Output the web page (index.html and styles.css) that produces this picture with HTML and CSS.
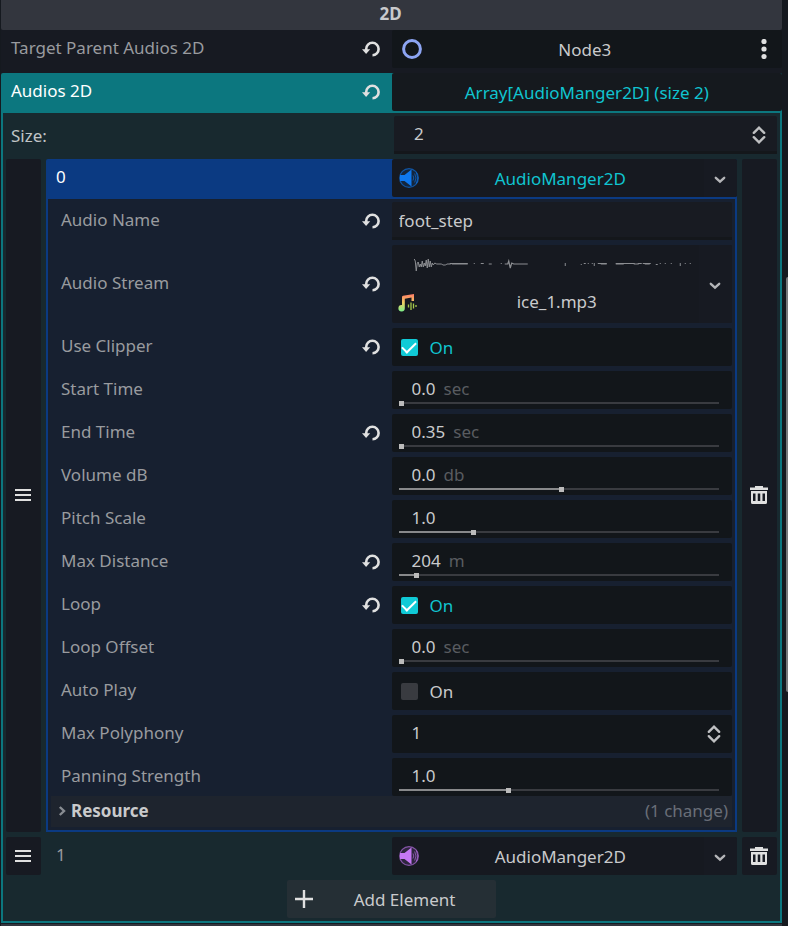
FILE: index.html
```html
<!DOCTYPE html>
<html lang="en">
<head>
<meta charset="utf-8">
<title>Inspector</title>
<link rel="stylesheet" href="styles.css">
</head>
<body>
<svg class="sprite" aria-hidden="true">
  <symbol id="reload" viewBox="0 0 20 18">
    <path d="M4.200 10V9A6.200 6.200 0 1 1 10.500 15.200" fill="none" stroke="currentColor" stroke-width="2.6"/>
    <path d="M0 9.2H8.200L4.100 14z" fill="currentColor"/>
  </symbol>
  <symbol id="chevron" viewBox="0 0 12 8">
    <path d="M1.8 1.8 6 5.6 10.2 1.8" fill="none" stroke="currentColor" stroke-width="2.4" stroke-linecap="round"/>
  </symbol>
  <symbol id="updown" viewBox="0 0 14 20">
    <path d="M1.8 7.8 7 2.6 12.2 7.8M1.8 12.2 7 17.4 12.2 12.2" fill="none" stroke="currentColor" stroke-width="2.4" stroke-linecap="round"/>
  </symbol>
  <symbol id="grip" viewBox="0 0 16 14">
    <path d="M0 2H16M0 7H16M0 12H16" fill="none" stroke="currentColor" stroke-width="2"/>
  </symbol>
  <symbol id="trash" viewBox="0 0 18 18">
    <path fill="currentColor" fill-rule="evenodd" d="M5 0H13V1.500H18V4H0V1.500H5zM1 5H17V16.500Q17 18 15.500 18H2.500Q1 18 1 16.500zM3 7.500V15H5.500V7.500zM7.750 7.500V15H10.250V7.500zM12.500 7.500V15H15V7.500z"/>
  </symbol>
  <symbol id="speaker" viewBox="0 0 20 20">
    <circle cx="10" cy="10" r="9.400" fill="currentColor" fill-opacity=".14" stroke="currentColor" stroke-width="1.200" stroke-opacity=".6"/>
    <path d="M1 7H5.500L12.500 1.500V18.500L5.500 13H1z" fill="currentColor"/>
    <path d="M14 7.500Q15.500 10 14 12.500M15.700 5.500Q18.300 10 15.700 14.500M17.500 4.500Q20 10 17.500 15.500" fill="none" stroke="currentColor" opacity=".6"/>
  </symbol>
</svg>

<main class="inspector">
  <h2 class="category">2D</h2>

  <div class="row">
    <div class="name"><span>Target Parent Audios 2D</span>
      <button class="icon-btn" aria-label="Revert"><svg class="i-reload"><use href="#reload"/></svg></button></div>
    <div class="field picker">
      <svg class="i-20" viewBox="0 0 20 20"><circle cx="10" cy="10" r="8.400" fill="none" stroke="#8da5f3" stroke-width="3"/></svg>
      <button class="pick node">Node3</button>
      <button class="more" aria-label="More"><svg class="i-20" viewBox="0 0 20 20" fill="#e0e0e0"><circle cx="10" cy="2.500" r="2.600"/><circle cx="10" cy="10" r="2.600"/><circle cx="10" cy="17.500" r="2.600"/></svg></button>
    </div>
  </div>

  <section class="array">
    <div class="head">
      <div class="name"><span>Audios 2D</span>
        <button class="icon-btn" aria-label="Revert"><svg class="i-reload"><use href="#reload"/></svg></button></div>
      <button class="field open">Array[AudioManger2D] (size 2)</button>
    </div>
    <div class="array-body">
      <div class="row size">
        <label class="name" for="size">Size:</label>
        <div class="field raised spin"><input id="size" type="number" value="2"><svg class="i-updown"><use href="#updown"/></svg></div>
      </div>

      <div class="item">
        <button class="side" aria-label="Move element 0"><svg class="i-grip"><use href="#grip"/></svg></button>
        <div class="resource">
          <div class="head">
            <div class="name">0</div>
            <div class="field picker type">
              <svg class="i-20 blue"><use href="#speaker"/></svg>
              <button class="pick accent">AudioManger2D</button>
              <button class="drop" aria-label="Options"><svg class="i-chevron"><use href="#chevron"/></svg></button>
            </div>
          </div>
          <div class="props">
            <div class="row">
              <div class="name"><label for="aname">Audio Name</label>
                <button class="icon-btn" aria-label="Revert"><svg class="i-reload"><use href="#reload"/></svg></button></div>
              <div class="field raised"><input id="aname" class="text" type="text" value="foot_step"></div>
            </div>
            <div class="row">
              <div class="name"><span>Audio Stream</span>
                <button class="icon-btn" aria-label="Revert"><svg class="i-reload"><use href="#reload"/></svg></button></div>
              <div class="field picker stream">
                <button class="preview">
                  <svg class="wave" viewBox="0 0 280 14" fill="none" stroke="#8b8d91">
                    <path d="M.5 1 1.500 3 2.500 13 3.500 5 4.500 4 5.500 9 6.500 6 7.500 9 8.500 3 9.500 9 10.500 5 11.500 8 12.500 2 13.500 10 14.500 1 15.500 9 16.500 3 17.500 9 18.500 5 19.500 7 21 5 23 6H28L29 7H32L33 6H37"/>
                    <path d="M38 6H54M75 6H78M91 6H94L95 3 96.500 10 98 5 100 6H114M187 6H193M202 6H210M220 6H225M231 6H236" stroke-width="1.200"/>
                    <path d="M36 5.500H54M60 5.500H61M67 5.500H70M87 5.500H88M151.500 5V8M167 6.500H168M170 5.500H172M174 5.500H175M178 5.500H179M180.500 5V8M184 5.500H193M202 5.500H221M224 5.500H228M229 5.500H237M242 6.500H244M246 5.500H247M251 5.500H252M257 5.500H258M266.500 5V8M271 5.500H272M276 5.500H277"/>
                  </svg>
                  <span class="file">
                    <svg class="i-20" viewBox="0 0 20 20">
                      <defs><linearGradient id="note" x1="0" y1="0" x2="0" y2="1"><stop offset="0" stop-color="#ff7a66"/><stop offset=".5" stop-color="#f0cf62"/><stop offset="1" stop-color="#7df08a"/></linearGradient></defs>
                      <path fill="url(#note)" d="M5 4Q5 3 6 2.800L17 1V8H14.500V4.500L7.800 5.800V15A3.200 3.200 0 1 1 5 12z"/>
                      <path d="M11.500 11.500V14.500M14 9.500V17M16.500 10.500V15.500M19 12V14" stroke="#a5c84a" stroke-width="1.300" fill="none"/>
                    </svg>
                    <span>ice_1.mp3</span>
                  </span>
                </button>
                <button class="drop" aria-label="Options"><svg class="i-chevron"><use href="#chevron"/></svg></button>
              </div>
            </div>
            <div class="row">
              <div class="name"><span>Use Clipper</span>
                <button class="icon-btn" aria-label="Revert"><svg class="i-reload"><use href="#reload"/></svg></button></div>
              <label class="field check"><input type="checkbox" checked><span>On</span></label>
            </div>
            <div class="row">
              <label class="name" for="start">Start Time</label>
              <div class="field slide"><div class="value"><input id="start" type="text" value="0.0"><span>sec</span></div><input type="range" aria-label="Start Time" value="0" style="--v:0%"></div>
            </div>
            <div class="row">
              <div class="name"><label for="end">End Time</label>
                <button class="icon-btn" aria-label="Revert"><svg class="i-reload"><use href="#reload"/></svg></button></div>
              <div class="field slide"><div class="value"><input id="end" type="text" value="0.35"><span>sec</span></div><input type="range" aria-label="End Time" value="0" style="--v:0%"></div>
            </div>
            <div class="row">
              <label class="name" for="volume">Volume dB</label>
              <div class="field slide"><div class="value"><input id="volume" type="text" value="0.0"><span>db</span></div><input type="range" aria-label="Volume dB" value="51" style="--v:51%"></div>
            </div>
            <div class="row">
              <label class="name" for="pitch">Pitch Scale</label>
              <div class="field slide"><div class="value"><input id="pitch" type="text" value="1.0"></div><input type="range" aria-label="Pitch Scale" value="23" style="--v:23%"></div>
            </div>
            <div class="row">
              <div class="name"><label for="distance">Max Distance</label>
                <button class="icon-btn" aria-label="Revert"><svg class="i-reload"><use href="#reload"/></svg></button></div>
              <div class="field slide"><div class="value"><input id="distance" type="text" value="204"><span>m</span></div><input type="range" aria-label="Max Distance" value="5" style="--v:5%"></div>
            </div>
            <div class="row">
              <div class="name"><span>Loop</span>
                <button class="icon-btn" aria-label="Revert"><svg class="i-reload"><use href="#reload"/></svg></button></div>
              <label class="field check"><input type="checkbox" checked><span>On</span></label>
            </div>
            <div class="row">
              <label class="name" for="offset">Loop Offset</label>
              <div class="field slide"><div class="value"><input id="offset" type="text" value="0.0"><span>sec</span></div><input type="range" aria-label="Loop Offset" value="0" style="--v:0%"></div>
            </div>
            <div class="row">
              <div class="name"><span>Auto Play</span></div>
              <label class="field check"><input type="checkbox"><span>On</span></label>
            </div>
            <div class="row">
              <label class="name" for="poly">Max Polyphony</label>
              <div class="field spin"><input id="poly" type="number" value="1"><svg class="i-updown"><use href="#updown"/></svg></div>
            </div>
            <div class="row">
              <label class="name" for="panning">Panning Strength</label>
              <div class="field slide"><div class="value"><input id="panning" type="text" value="1.0"></div><input type="range" aria-label="Panning Strength" value="34" style="--v:34%"></div>
            </div>
            <button class="group"><svg class="i-arrow" viewBox="0 0 8 12"><path d="M1.800 2 6 6 1.800 10" fill="none" stroke="currentColor" stroke-width="2.400"/></svg><b>Resource</b><span>(1 change)</span></button>
          </div>
        </div>
        <button class="side" aria-label="Remove element 0"><svg class="i-18"><use href="#trash"/></svg></button>
      </div>

      <div class="item">
        <button class="side" aria-label="Move element 1"><svg class="i-grip"><use href="#grip"/></svg></button>
        <div class="row closed">
          <div class="name">1</div>
          <div class="field picker type">
            <svg class="i-20 purple"><use href="#speaker"/></svg>
            <button class="pick">AudioManger2D</button>
            <button class="drop" aria-label="Options"><svg class="i-chevron"><use href="#chevron"/></svg></button>
          </div>
        </div>
        <button class="side" aria-label="Remove element 1"><svg class="i-18"><use href="#trash"/></svg></button>
      </div>

      <button class="add"><svg class="i-18" viewBox="0 0 18 18"><path d="M9 0V18M0 9H18" stroke="currentColor" stroke-width="2.400"/></svg><span>Add Element</span></button>
    </div>
  </section>
  <div class="next"></div>
</main>
<div class="scrollbar"><div class="thumb"></div></div>
</body>
</html>
```

FILE: styles.css
```css
* { box-sizing: border-box; }
body {
  margin: 0;
  height: 100vh;
  overflow: hidden;
  display: flex;
  background: #15191f;
  color: #c9cacc;
  font: 17px/24px "Noto Sans", sans-serif;
}
button, input { font: inherit; color: inherit; background: none; border: 0; margin: 0; padding: 0; min-width: 0; }
input { outline: 0; }
svg { display: block; flex: none; }
.sprite { position: absolute; width: 0; height: 0; }
.i-reload { width: 20px; height: 18px; }
.i-20 { width: 20px; height: 20px; }
.i-18 { width: 18px; height: 18px; }
.i-chevron { width: 12px; height: 8px; }
.i-updown { width: 14px; height: 20px; }
.i-grip { width: 16px; height: 14px; }
.i-arrow { width: 8px; height: 12px; }
.blue { color: #0f78ee; }
.purple { color: #c678f5; }

.inspector { flex: 1; margin-left: 1px; background: #171a22; }
.category {
  margin: 0;
  height: 30px;
  padding: 0 2px 2px 0;
  background: #33363e;
  border-radius: 0 0 2px 2px;
  font-size: 17px;
  line-height: 28px;
  text-align: center;
}
.row, .head { display: grid; grid-template-columns: 1fr 1fr; }
.row { margin-bottom: 5px; }
.name {
  display: flex;
  align-items: center;
  justify-content: space-between;
  padding: 0 10px;
  color: #999b9f;
  min-height: 38px;
}
.name > span, .name > label, label.name, div.name:not(:has(*)) { padding-bottom: 2px; }
.icon-btn { color: #e0e0e0; }
.field { min-height: 38px; border-radius: 2px; background: #12161a; min-width: 0; }
.raised { background: #181b22; border-bottom: 3px solid #14171b; border-radius: 2px 2px 0 0; }

.picker { display: flex; align-items: center; padding-left: 10px; }
.pick { flex: 1; height: 38px; padding: 2px 2px 0 0; text-align: center; }
.node { padding: 2px 0 0 2px; }
.more { width: 36px; height: 38px; display: grid; place-items: center; }
.type { background: #161920; padding-left: 7px; }
.drop { align-self: stretch; width: 33px; display: grid; place-items: center; background: #171a22; border-radius: 0 2px 2px 0; color: #b4b5b8; padding: 3px 2px 0 0; }
.accent, .open { color: #10c4d0; }

.head { background: #0c777f; border-radius: 2px 2px 0 0; padding-bottom: 2px; }
.head .name { color: #fff; }
.open { background: #15191e; text-align: center; padding-top: 2px; }
.array-body { border: 2px solid #0c777f; border-top: 0; background: #18292f; padding: 3px; }
.size { column-gap: 5px; }
.size label.name { color: #c0c4c6; padding: 1px 5px 0; }
.spin { display: flex; align-items: center; padding: 0 11px 0 20px; }
.spin input { flex: 1; appearance: textfield; padding-bottom: 2px; }
.spin.raised { padding-top: 2px; }
.spin input::-webkit-inner-spin-button { appearance: none; }
.spin svg { color: #bfc0c2; }

.item { display: grid; grid-template-columns: 35px 1fr 35px; gap: 5px; margin-bottom: 5px; }
.side { display: grid; place-items: center; background: #171a22; border-radius: 2px; color: #e0e0e0; padding: 0 2px 1px 0; }
.resource .head { background: #0b3a82; }
.closed { margin: 0; }
.props { border: 2px solid #0b3a82; border-top: 0; background: #172030; padding: 3px; }
.text { width: 100%; height: 35px; padding: 2px 7px 0; }
.stream { background: #161920; padding: 0; }
.preview { flex: 1; height: 78px; padding: 4px 5px 0; }
.wave { width: 100%; height: 14px; padding-left: 16px; }
.file { display: flex; align-items: center; height: 24px; margin-top: 18px; }
.file svg { margin-top: 2px; }
.file span { flex: 1; padding-left: 3px; }
.check { display: flex; align-items: center; gap: 12px; padding: 0 9px; }
.check input { appearance: none; width: 17px; height: 17px; border-radius: 2px; background: #393b40; display: grid; place-items: center; }
.check span { padding-top: 2px; }
.check input:checked { background: #10cad6; }
.check input:checked::before { content: ""; width: 12px; height: 6px; border: solid #fff; border-width: 0 0 2px 2px; rotate: -45deg; margin-bottom: 3px; }
.check input:checked + span { color: #10c4d0; }
.slide { display: flex; flex-direction: column; padding: 6px 13px 3px 7px; }
.value { display: flex; gap: 8px; padding-left: 13px; height: 24px; }
.value input { field-sizing: content; height: 24px; }
.value span { color: #595c60; }
input[type="range"] {
  appearance: none;
  display: block;
  height: 5px;
  background: linear-gradient(90deg, #88898b var(--v), #393b40 var(--v)) 0 1px / 100% 2px no-repeat;
}
input[type="range"]::-webkit-slider-thumb { appearance: none; width: 5px; height: 5px; background: #bbb; }
.props .row:nth-last-child(2) { margin-bottom: 0; }
.group { display: flex; align-items: center; gap: 5px; width: 100%; height: 31px; padding: 0 4px 2px 7px; background: #1e242e; color: #888c92; }
.group b { color: #c9cacc; }
.group span { margin-left: auto; color: #696e78; }
.add { display: flex; align-items: center; width: 209px; height: 38px; margin: 0 auto; padding: 0 0 0 8px; background: #252f35; border-radius: 2px; }
.add span { flex: 1; padding-top: 2px; }
.add svg { color: #e0e0e0; }
.next { height: 30px; margin-top: 1px; background: #33363e; }
.scrollbar { width: 6px; padding: 277px 0 0 4px; }
.thumb { height: 415px; background: #77797c; border-radius: 2px 0 0 2px; }
```
